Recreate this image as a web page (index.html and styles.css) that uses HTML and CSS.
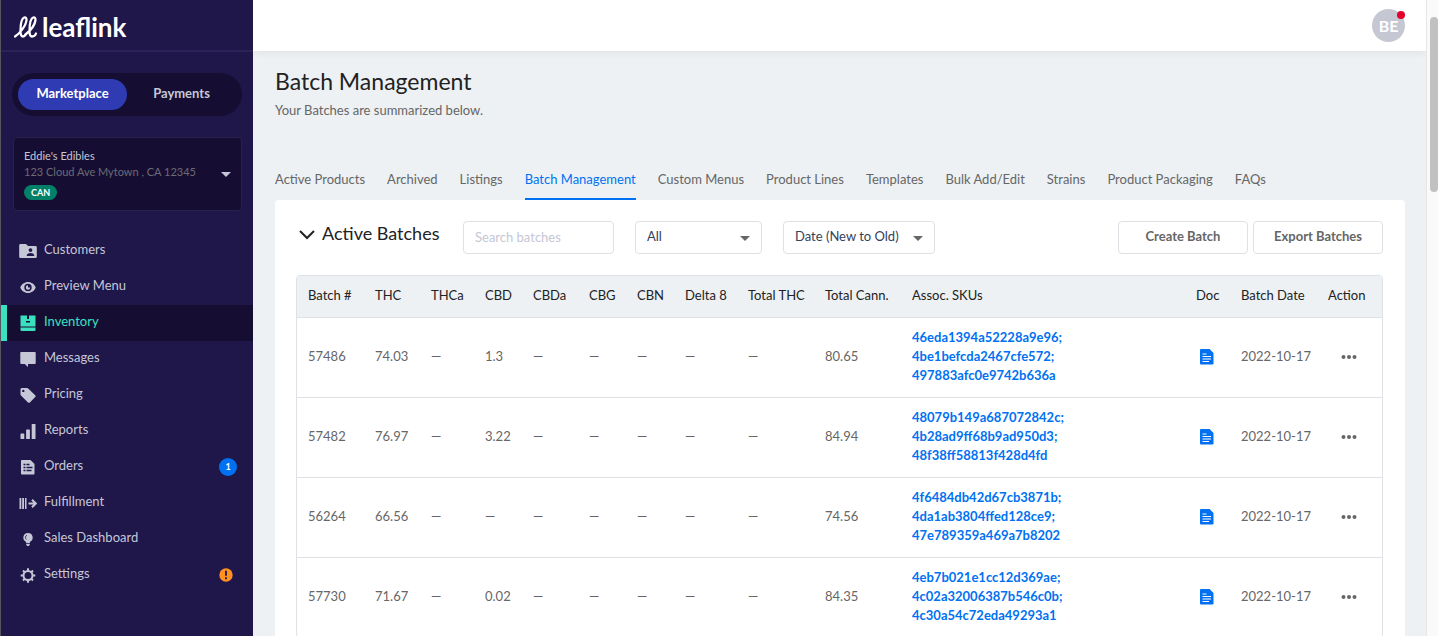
FILE: index.html
```html
<!DOCTYPE html>
<html lang="en">
<head>
  <meta charset="UTF-8">
  <meta name="viewport" content="width=device-width, initial-scale=1.0">
  <title>Batch Management</title>
  <link rel="stylesheet" href="styles.css">
</head>
<body>
  <svg class="sprite" aria-hidden="true">
    <symbol id="doc" viewBox="0 0 14 16">
      <path d="M1 0h8.500l4 4v10.500a1 1 0 0 1-1 1H1a1 1 0 0 1-1-1V1a1 1 0 0 1 1-1z" fill="#0071f2"/>
      <path d="M2.500 5h4M2.500 7.500h8.500M2.500 10h8.500M2.500 12.500h6.500" stroke="#fff" stroke-width="1.200"/>
    </symbol>
    <symbol id="dots" viewBox="0 0 16 6">
      <circle cx="2.500" cy="3" r="2"/><circle cx="8" cy="3" r="2"/><circle cx="13.500" cy="3" r="2"/>
    </symbol>
  </svg>
  <div class="wrap">
    <aside class="sidebar">
      <a class="logo" href="#">
        <svg width="24" height="22" viewBox="0 0 24 22" fill="none" stroke="#fff" stroke-width="2.300" stroke-linecap="round">
          <path d="M1 20.500c5-3 11-11 11.500-16.500 0-2-1-3-2.300-2.500C7.500 2.500 6.500 9 6.500 15c0 3.500.8 5.500 2.500 5.500 1.300 0 2-.8 2.500-1.800"/>
          <path d="M11.500 18.500c5-4 9.500-10 10-14.500 0-2-1-3-2.300-2.500C16.500 2.500 15.500 9 15.500 15c0 3.500.8 5.500 2.500 5.500 2 0 3.500-1.500 4-3"/>
        </svg>
        <span>leaflink</span>
      </a>
      <div class="switch">
        <button class="switch-btn active" type="button">Marketplace</button>
        <button class="switch-btn" type="button">Payments</button>
      </div>
      <button class="account" type="button">
        <span class="account-info">
          <span class="account-name">Eddie's Edibles</span>
          <span class="account-address">123 Cloud Ave Mytown , CA 12345</span>
          <span class="account-tag">CAN</span>
        </span>
        <span class="caret"></span>
      </button>
      <nav class="menu">
        <a class="menu-item" href="#">
          <svg viewBox="0 0 18 18"><path fill-rule="evenodd" d="M2 2h5l2 2h7.500a1.300 1.300 0 0 1 1.300 1.300v9.400a1.300 1.300 0 0 1-1.300 1.300H1.500A1.300 1.300 0 0 1 .2 14.700V3.300A1.300 1.300 0 0 1 1.500 2zM11.500 6.200a1.900 1.900 0 1 0 0 3.800 1.900 1.900 0 0 0 0-3.800zM7.800 14h7.400v-.8c0-1.500-2.200-2.200-3.700-2.200s-3.700.7-3.700 2.200z"/></svg>
          <span class="label">Customers</span>
        </a>
        <a class="menu-item" href="#">
          <svg viewBox="0 0 18 18"><path fill-rule="evenodd" d="M9 4C5.500 4 2.500 6.300 1.300 9.500 2.500 12.700 5.500 15 9 15s6.500-2.300 7.700-5.500C15.500 6.300 12.500 4 9 4zm0 9.200a3.700 3.700 0 1 1 0-7.400 3.700 3.700 0 0 1 0 7.400z"/><path d="M9 7.300v2.200h2.200A2.200 2.200 0 1 1 9 7.300z"/></svg>
          <span class="label">Preview Menu</span>
        </a>
        <a class="menu-item active" href="#">
          <svg viewBox="0 0 18 18"><path fill-rule="evenodd" d="M1.500 1.500H8V5h2V1.500h6.500v11h-15zM7 7v1.500h4V7zM1.500 13.500h15V16a1 1 0 0 1-1 1h-13a1 1 0 0 1-1-1z"/></svg>
          <span class="label">Inventory</span>
        </a>
        <a class="menu-item" href="#">
          <svg viewBox="0 0 18 18"><path d="M2.300 2h13.400c.6 0 1 .4 1 1v10c0 .6-.4 1-1 1H9v3l-3.200-3H2.300a1 1 0 0 1-1-1V3c0-.6.4-1 1-1z"/></svg>
          <span class="label">Messages</span>
        </a>
        <a class="menu-item" href="#">
          <svg viewBox="0 0 18 18"><path fill-rule="evenodd" d="M3 2h5c.5 0 .8.200 1.200.500l7 6.700c.6.600.6 1.300 0 1.900l-5.300 5.300c-.6.600-1.300.6-1.900 0l-7-7c-.4-.3-.5-.7-.5-1.200V3.500C1.500 2.700 2.200 2 3 2zm1.300 1.700a1.200 1.200 0 1 0 0 2.400 1.200 1.200 0 0 0 0-2.400z"/></svg>
          <span class="label">Pricing</span>
        </a>
        <a class="menu-item" href="#">
          <svg viewBox="0 0 18 18"><rect x="1.500" y="11.500" width="3.800" height="5.500" rx=".6"/><rect x="7.100" y="7.500" width="3.800" height="9.500" rx=".6"/><rect x="12.700" y="2" width="3.800" height="15" rx=".6"/></svg>
          <span class="label">Reports</span>
        </a>
        <a class="menu-item" href="#">
          <svg viewBox="0 0 18 18"><path d="M3 2h8.500L15.500 6v9.500c0 .6-.4 1-1 1H3c-.6 0-1-.4-1-1V3c0-.6.400-1 1-1z"/><path d="M4.500 6.500h2m1 0h3M4.500 9.500h2m1 0h6M4.500 12.500h2m1 0h5" stroke="#1f164a" stroke-width="1.300"/></svg>
          <span class="label">Orders</span>
          <span class="badge">1</span>
        </a>
        <a class="menu-item" href="#">
          <svg viewBox="0 0 18 18"><path d="M.5 4h1.800v11H.5zM3.200 4H5v11H3.200zM6 4h1.500v11H6z"/><path class="line" d="M9.500 9.500h7M13 5.700l3.800 3.800-3.800 3.800"/></svg>
          <span class="label">Fulfillment</span>
        </a>
        <a class="menu-item" href="#">
          <svg viewBox="0 0 18 18"><path d="M9 3a4.600 4.600 0 0 0-2.500 8.500c.6.500.7 1 .7 1.700h3.600c0-.7.1-1.200.7-1.700A4.600 4.600 0 0 0 9 3zM7.300 14h3.400v1L9.800 16H8.200l-.9-1z"/><path d="M7.900 5.200c-1.800.8-1.900 3.200-.5 4.200" fill="none" stroke="#1f164a" stroke-width=".8"/></svg>
          <span class="label">Sales Dashboard</span>
        </a>
        <a class="menu-item" href="#">
          <svg viewBox="0 0 18 18"><circle class="line" cx="9" cy="9.500" r="4.500"/><path class="line" d="M9 2.200v2.600M9 14.200v2.600M1.700 9.500h2.600M13.700 9.500h2.600M4 4.500l1.600 1.600M12.400 12.900l1.600 1.600M4 14.500l1.600-1.600M12.400 6.100L14 4.500"/></svg>
          <span class="label">Settings</span>
          <svg class="alert" viewBox="0 0 14 14"><circle cx="7" cy="7" r="6.700" fill="#ff9122"/><path d="M7 2.800v5M7 9.300v2" stroke="#1f164a" stroke-width="1.800"/></svg>
        </a>
      </nav>
    </aside>

    <div class="page">
      <header class="topbar">
        <button class="avatar" type="button">BE<span class="dot"></span></button>
      </header>
      <main class="content">
        <h1>Batch Management</h1>
        <p class="summary">Your Batches are summarized below.</p>
        <nav class="tabs">
          <a href="#">Active Products</a>
          <a href="#">Archived</a>
          <a href="#">Listings</a>
          <a class="active" href="#">Batch Management</a>
          <a href="#">Custom Menus</a>
          <a href="#">Product Lines</a>
          <a href="#">Templates</a>
          <a href="#">Bulk Add/Edit</a>
          <a href="#">Strains</a>
          <a href="#">Product Packaging</a>
          <a href="#">FAQs</a>
        </nav>
        <section class="panel">
          <div class="toolbar">
            <h2>
              <button class="collapse" type="button">
                <svg width="16" height="10" viewBox="0 0 16 10" fill="none" stroke="#222" stroke-width="2"><path d="M1 1l7 7 7-7"/></svg>
                <span>Active Batches</span>
              </button>
            </h2>
            <input class="search" type="text" placeholder="Search batches" aria-label="Search batches">
            <div class="select status">
              <select aria-label="Status"><option>All</option></select>
            </div>
            <div class="select sort">
              <select aria-label="Sort by"><option>Date (New to Old)</option></select>
            </div>
            <div class="btn-group">
              <button class="btn" type="button">Create Batch</button>
              <button class="btn" type="button">Export Batches</button>
            </div>
          </div>
          <div class="table-wrap">
            <table>
              <colgroup>
                <col class="col-batch"><col class="col-thc"><col class="col-thca"><col class="col-cbd"><col class="col-cbda"><col class="col-cbg"><col class="col-cbn"><col class="col-delta"><col class="col-total"><col class="col-cann"><col><col class="col-doc"><col class="col-date"><col class="col-action">
              </colgroup>
              <thead>
                <tr>
                  <th>Batch #</th><th>THC</th><th>THCa</th><th>CBD</th><th>CBDa</th><th>CBG</th><th>CBN</th><th>Delta 8</th><th>Total THC</th><th>Total Cann.</th><th>Assoc. SKUs</th><th>Doc</th><th>Batch Date</th><th>Action</th>
                </tr>
              </thead>
              <tbody>
                <tr>
                  <td>57486</td><td>74.03</td><td>—</td><td>1.3</td><td>—</td><td>—</td><td>—</td><td>—</td><td>—</td><td>80.65</td>
                  <td class="skus"><a href="#">46eda1394a52228a9e96;</a><a href="#">4be1befcda2467cfe572;</a><a href="#">497883afc0e9742b636a</a></td>
                  <td><a class="doc" href="#" aria-label="Document"><svg><use href="#doc"/></svg></a></td>
                  <td>2022-10-17</td>
                  <td><button class="more" type="button" aria-label="Actions"><svg><use href="#dots"/></svg></button></td>
                </tr>
                <tr>
                  <td>57482</td><td>76.97</td><td>—</td><td>3.22</td><td>—</td><td>—</td><td>—</td><td>—</td><td>—</td><td>84.94</td>
                  <td class="skus"><a href="#">48079b149a687072842c;</a><a href="#">4b28ad9ff68b9ad950d3;</a><a href="#">48f38ff58813f428d4fd</a></td>
                  <td><a class="doc" href="#" aria-label="Document"><svg><use href="#doc"/></svg></a></td>
                  <td>2022-10-17</td>
                  <td><button class="more" type="button" aria-label="Actions"><svg><use href="#dots"/></svg></button></td>
                </tr>
                <tr>
                  <td>56264</td><td>66.56</td><td>—</td><td>—</td><td>—</td><td>—</td><td>—</td><td>—</td><td>—</td><td>74.56</td>
                  <td class="skus"><a href="#">4f6484db42d67cb3871b;</a><a href="#">4da1ab3804ffed128ce9;</a><a href="#">47e789359a469a7b8202</a></td>
                  <td><a class="doc" href="#" aria-label="Document"><svg><use href="#doc"/></svg></a></td>
                  <td>2022-10-17</td>
                  <td><button class="more" type="button" aria-label="Actions"><svg><use href="#dots"/></svg></button></td>
                </tr>
                <tr>
                  <td>57730</td><td>71.67</td><td>—</td><td>0.02</td><td>—</td><td>—</td><td>—</td><td>—</td><td>—</td><td>84.35</td>
                  <td class="skus"><a href="#">4eb7b021e1cc12d369ae;</a><a href="#">4c02a32006387b546c0b;</a><a href="#">4c30a54c72eda49293a1</a></td>
                  <td><a class="doc" href="#" aria-label="Document"><svg><use href="#doc"/></svg></a></td>
                  <td>2022-10-17</td>
                  <td><button class="more" type="button" aria-label="Actions"><svg><use href="#dots"/></svg></button></td>
                </tr>
              </tbody>
            </table>
          </div>
        </section>
      </main>
    </div>
    <div class="scrollbar"><div class="thumb"></div></div>
  </div>
</body>
</html>
```
FILE: styles.css
```css
* {
  box-sizing: border-box;
}
html, body {
  margin: 0;
  padding: 0;
  height: 100%;
}
body {
  font-family: Lato, "Liberation Sans", sans-serif;
  font-size: 13px;
  line-height: 19px;
  color: #666;
  background-color: #edf1f4;
}
button, input, select {
  font: inherit;
  color: inherit;
}
button {
  padding: 0;
  border: none;
  background: none;
  cursor: pointer;
}
a {
  color: inherit;
  text-decoration: none;
}
.sprite {
  display: none;
}
.wrap {
  height: 100%;
  display: flex;
  overflow: hidden;
}

/* sidebar */
.sidebar {
  flex: none;
  width: 253px;
  background-color: #1f164a;
  border-left: 1px solid #55535c;
  color: #c5c7d6;
}
.logo {
  display: flex;
  align-items: center;
  gap: 4px;
  height: 52px;
  padding: 4px 13px 0;
  border-bottom: 2px solid #2b2257;
  color: #fff;
  font-size: 26px;
  line-height: 30px;
  font-weight: bold;
}
.switch {
  display: flex;
  margin: 21px 11px;
  padding: 6px;
  border-radius: 22px;
  background-color: #150e32;
}
.switch-btn {
  flex: 1;
  height: 31px;
  padding-bottom: 2px;
  border-radius: 16px;
  font-weight: bold;
}
.switch-btn.active {
  background-color: #2f3bb3;
  color: #fff;
}
.account {
  display: flex;
  align-items: center;
  justify-content: space-between;
  width: 229px;
  height: 74px;
  margin-left: 12px;
  padding: 0 10px;
  border: 1px solid #29204d;
  border-radius: 4px;
  background-color: #150e32;
  text-align: left;
}
.account-info {
  display: flex;
  flex-direction: column;
  align-items: flex-start;
  font-size: 11px;
  line-height: 16px;
}
.account-address {
  color: #6d6a75;
}
.account-tag {
  margin-top: 5px;
  padding: 0 7px;
  border-radius: 8px;
  background-color: #028168;
  color: #fff;
  font-size: 9px;
  line-height: 15px;
  font-weight: bold;
}
.caret {
  border: 5px solid transparent;
  border-top-color: #c5c7d6;
  border-bottom: none;
}
.menu {
  margin-top: 22px;
}
.menu-item {
  display: flex;
  align-items: center;
  height: 36px;
  padding: 0 16px 0 12px;
  border-left: 6px solid transparent;
}
.menu-item svg {
  width: 18px;
  height: 18px;
  margin-right: 7px;
  fill: #c5c7d6;
}
.menu-item .label {
  padding-bottom: 3px;
}
.menu-item .line {
  fill: none;
  stroke: #c5c7d6;
  stroke-width: 2px;
}
.menu-item.active {
  border-left-color: #3be0c1;
  background-color: #150e32;
  color: #3be0c1;
}
.menu-item.active svg {
  fill: #3be0c1;
}
.badge {
  width: 18px;
  height: 18px;
  margin-left: auto;
  border-radius: 50%;
  background-color: #0071f2;
  color: #fff;
  font-size: 9px;
  line-height: 18px;
  font-weight: bold;
  text-align: center;
}
.menu-item .alert {
  width: 14px;
  height: 14px;
  margin-left: auto;
  margin-right: 4px;
}

/* page */
.page {
  flex: 1;
  min-width: 0;
  overflow-y: auto;
  scrollbar-width: none;
}
.topbar {
  display: flex;
  align-items: center;
  justify-content: flex-end;
  height: 51px;
  padding: 0 21px;
  background-color: #fff;
  box-shadow: 0 2px 8px rgba(0, 0, 0, 0.06);
}
.avatar {
  position: relative;
  width: 33px;
  height: 33px;
  border-radius: 50%;
  background-color: #c5c7d3;
  color: #fff;
  font-size: 16px;
  font-weight: bold;
}
.dot {
  position: absolute;
  top: 2px;
  right: 0;
  width: 8px;
  height: 8px;
  border-radius: 50%;
  background-color: #e4002b;
}
.content {
  padding: 16px 21px 0 22px;
}
h1 {
  margin: 0;
  font-size: 23px;
  line-height: 28px;
  font-weight: normal;
  color: #222;
}
.summary {
  margin: 6px 0 50px;
}
.tabs {
  display: flex;
  gap: 22px;
}
.tabs a {
  padding-bottom: 9px;
  border-bottom: 2px solid transparent;
  white-space: nowrap;
}
.tabs a.active {
  border-bottom-color: #0071f2;
  color: #0071f2;
}
.panel {
  padding: 21px 22px 21px 21px;
  border-radius: 4px;
  background-color: #fff;
}
.toolbar {
  display: flex;
  align-items: center;
  gap: 21px;
  margin-bottom: 21px;
}
h2 {
  width: 146px;
  margin: 0;
  font-size: 18px;
  line-height: 24px;
  font-weight: normal;
  color: #222;
}
.collapse {
  display: flex;
  align-items: center;
  gap: 7px;
  padding: 0 0 5px 3px;
  white-space: nowrap;
}
.collapse span {
  padding-bottom: 4px;
}
.search, select {
  width: 100%;
  height: 33px;
  padding: 0 11px 2px;
  border: 1px solid #dfe1e6;
  border-radius: 4px;
  background-color: #fff;
  color: #33415c;
}
.search {
  width: 151px;
}
.search::placeholder {
  color: #c5c7d6;
}
.select {
  position: relative;
}
.status {
  width: 127px;
}
.sort {
  width: 152px;
}
select {
  appearance: none;
}
.select::after {
  content: "";
  position: absolute;
  top: 15px;
  right: 12px;
  border: 5px solid transparent;
  border-top-color: #666;
  border-bottom: none;
  pointer-events: none;
}
.btn-group {
  display: flex;
  gap: 5px;
  margin-left: auto;
}
.btn {
  width: 130px;
  height: 33px;
  padding-bottom: 2px;
  border: 1px solid #dfe1e6;
  border-radius: 4px;
  font-weight: bold;
}

/* batches table */
.table-wrap {
  border: 1px solid #dfe1e6;
  border-radius: 4px;
  overflow: hidden;
}
table {
  width: 100%;
  border-collapse: collapse;
  table-layout: fixed;
}
th {
  height: 41px;
  padding: 0 0 2px 11px;
  background-color: #edf1f4;
  color: #222;
  font-weight: normal;
  text-align: left;
  white-space: nowrap;
}
td {
  height: 80px;
  padding: 0 0 2px 11px;
  border-top: 1px solid #dfe1e6;
}
.skus a {
  display: block;
  color: #0071f2;
  font-weight: bold;
}
.doc {
  display: block;
  padding: 2px 0 0 4px;
}
.doc svg {
  display: block;
  width: 14px;
  height: 16px;
}
.more {
  display: block;
  padding: 2px 0 0 13px;
}
.more svg {
  display: block;
  width: 16px;
  height: 6px;
  fill: #666;
}
.col-batch { width: 67px; }
.col-thc { width: 56px; }
.col-thca { width: 54px; }
.col-cbd { width: 48px; }
.col-cbda { width: 56px; }
.col-cbg { width: 48px; }
.col-cbn { width: 48px; }
.col-delta { width: 63px; }
.col-total { width: 77px; }
.col-cann { width: 87px; }
.col-doc { width: 45px; }
.col-date { width: 87px; }
.col-action { width: 65px; }

.scrollbar {
  flex: none;
  width: 12px;
  padding: 17px 0 0 3px;
  border-left: 1px solid #e6e6e6;
  background-color: #fafafa;
}
.thumb {
  height: 175px;
  border-radius: 4px;
  background-color: #c1c1c1;
}
```
